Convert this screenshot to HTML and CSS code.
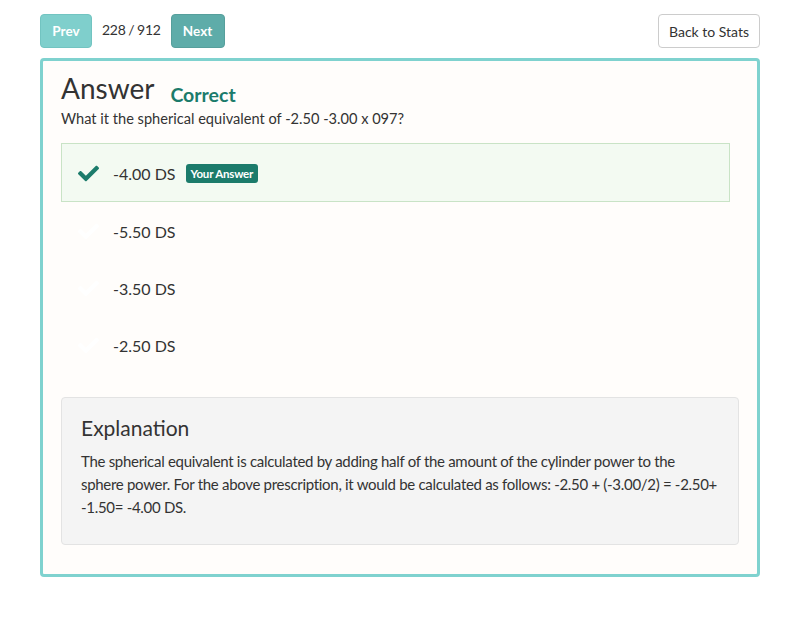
FILE: index.html
```
<!DOCTYPE html>
<html>
<head>
<meta charset="utf-8">
<link rel="stylesheet" href="styles.css">
</head>
<body>
<div class="page">
  <div class="toolbar">
    <div class="nav">
      <button class="btn btn-prev">Prev</button>
      <span class="count">228 / 912</span>
      <button class="btn btn-next">Next</button>
    </div>
    <button class="btn btn-back">Back to Stats</button>
  </div>
  <div class="card">
    <div class="head">
      <h1 class="title">Answer</h1>
      <span class="status">Correct</span>
    </div>
    <p class="question">What it the spherical equivalent of -2.50 -3.00 x 097?</p>
    <ul class="options">
      <li class="option selected">
        <svg class="check" viewBox="0 0 512 512"><path d="M173.9 439.4L7.5 273c-10-10-10-26.2 0-36.2l36.2-36.2c10-10 26.2-10 36.2 0L192 312.7 432.1 72.6c10-10 26.2-10 36.2 0l36.2 36.2c10 10 10 26.2 0 36.2L210.1 439.4c-10 10-26.2 10-36.2 0z"/></svg>
        <span class="label">-4.00 DS</span>
        <span class="badge">Your Answer</span>
      </li>
      <li class="option">
        <svg class="check faint" viewBox="0 0 512 512"><path d="M173.9 439.4L7.5 273c-10-10-10-26.2 0-36.2l36.2-36.2c10-10 26.2-10 36.2 0L192 312.7 432.1 72.6c10-10 26.2-10 36.2 0l36.2 36.2c10 10 10 26.2 0 36.2L210.1 439.4c-10 10-26.2 10-36.2 0z"/></svg>
        <span class="label">-5.50 DS</span>
      </li>
      <li class="option">
        <svg class="check faint" viewBox="0 0 512 512"><path d="M173.9 439.4L7.5 273c-10-10-10-26.2 0-36.2l36.2-36.2c10-10 26.2-10 36.2 0L192 312.7 432.1 72.6c10-10 26.2-10 36.2 0l36.2 36.2c10 10 10 26.2 0 36.2L210.1 439.4c-10 10-26.2 10-36.2 0z"/></svg>
        <span class="label">-3.50 DS</span>
      </li>
      <li class="option">
        <svg class="check faint" viewBox="0 0 512 512"><path d="M173.9 439.4L7.5 273c-10-10-10-26.2 0-36.2l36.2-36.2c10-10 26.2-10 36.2 0L192 312.7 432.1 72.6c10-10 26.2-10 36.2 0l36.2 36.2c10 10 10 26.2 0 36.2L210.1 439.4c-10 10-26.2 10-36.2 0z"/></svg>
        <span class="label">-2.50 DS</span>
      </li>
    </ul>
    <div class="explanation">
      <h2 class="exp-title">Explanation</h2>
      <p class="exp-text">The spherical equivalent is calculated by adding half of the amount of the cylinder power to the sphere power. For the above prescription, it would be calculated as follows: -2.50 + (-3.00/2) = -2.50+ -1.50= -4.00 DS.</p>
    </div>
  </div>
</div>
</body>
</html>
```
FILE: styles.css
```
* { box-sizing: border-box; }
html, body { margin: 0; padding: 0; background: #ffffff; }
body {
  font-family: Lato, "Noto Sans", sans-serif;
  color: #333333;
  font-size: 14px;
}
.page {
  padding: 14px 40px 0 40px;
}
.toolbar {
  display: flex;
  justify-content: space-between;
  align-items: flex-start;
}
.nav {
  display: flex;
  align-items: center;
}
.btn {
  font-family: Lato, "Noto Sans", sans-serif;
  height: 34px;
  border-radius: 4px;
  font-size: 14px;
  padding: 0;
  border: 1px solid transparent;
  cursor: pointer;
}
.btn-prev {
  width: 52px;
  background: #7fcfcc;
  border-color: #72c4c1;
  color: #ffffff;
  font-weight: 700;
  font-size: 13.5px;
}
.btn-next {
  width: 54px;
  background: #5eaca9;
  border-color: #569f9c;
  color: #ffffff;
  font-weight: 700;
  font-size: 13.5px;
}
.count {
  margin: 0 10px 0 10px;
  font-size: 14px;
  letter-spacing: -0.3px;
  word-spacing: -0.5px;
  color: #333;
  padding-bottom: 4px;
}
.btn-back {
  width: 102px;
  background: #ffffff;
  border-color: #cccccc;
  color: #333333;
}
.card {
  margin-top: 10px;
  border: 3px solid #7fd2cf;
  border-radius: 4px;
  background: #fffdfb;
  padding: 9px 18px 30px 18px;
  height: 519px;
}
.head {
  display: flex;
  align-items: baseline;
}
.title {
  margin: 0;
  font-size: 28px;
  font-weight: 400;
  line-height: 36px;
  color: #333;
}
.status {
  margin-left: 16px;
  font-size: 19.5px;
  font-weight: 700;
  color: #1b7b6b;
  position: relative;
  top: 3px;
}
.question {
  margin: 3px 0 0 0;
  font-size: 14.6px;
  line-height: 20px;
}
.options {
  list-style: none;
  margin: 14px 9px 0 0;
  padding: 0;
}
.option {
  display: flex;
  align-items: center;
  height: 57px;
  padding: 2px 0 0 16px;
  border: 1px solid transparent;
}
.option.selected {
  height: 59px;
  background: #f3faf2;
  border-color: #c9e3c6;
}
.check {
  width: 21px;
  height: 21px;
  fill: #1b7b6b;
  margin-right: 14px;
}
.check.faint {
  fill: #ffffff;
}
.label {
  color: #333;
  font-size: 16px;
}
.badge {
  margin-left: 10px;
  background: #1b7b6b;
  color: #ffffff;
  font-size: 11.5px;
  font-weight: 700;
  padding: 4px 5px 3px 5px;
  border-radius: 3px;
  line-height: 12px;
  letter-spacing: -0.2px;
}
.explanation {
  margin-top: 24px;
  background: #f4f4f4;
  border: 1px solid #e3e3e3;
  border-radius: 4px;
  padding: 16px 20px 25px 19px;
}
.exp-title {
  margin: 0;
  font-size: 21px;
  font-weight: 400;
  line-height: 28px;
  color: #333;
}
.exp-text {
  margin: 8px 0 0 0;
  font-size: 15px;
  line-height: 23px;
  letter-spacing: -0.3px;
  color: #333;
}
```
